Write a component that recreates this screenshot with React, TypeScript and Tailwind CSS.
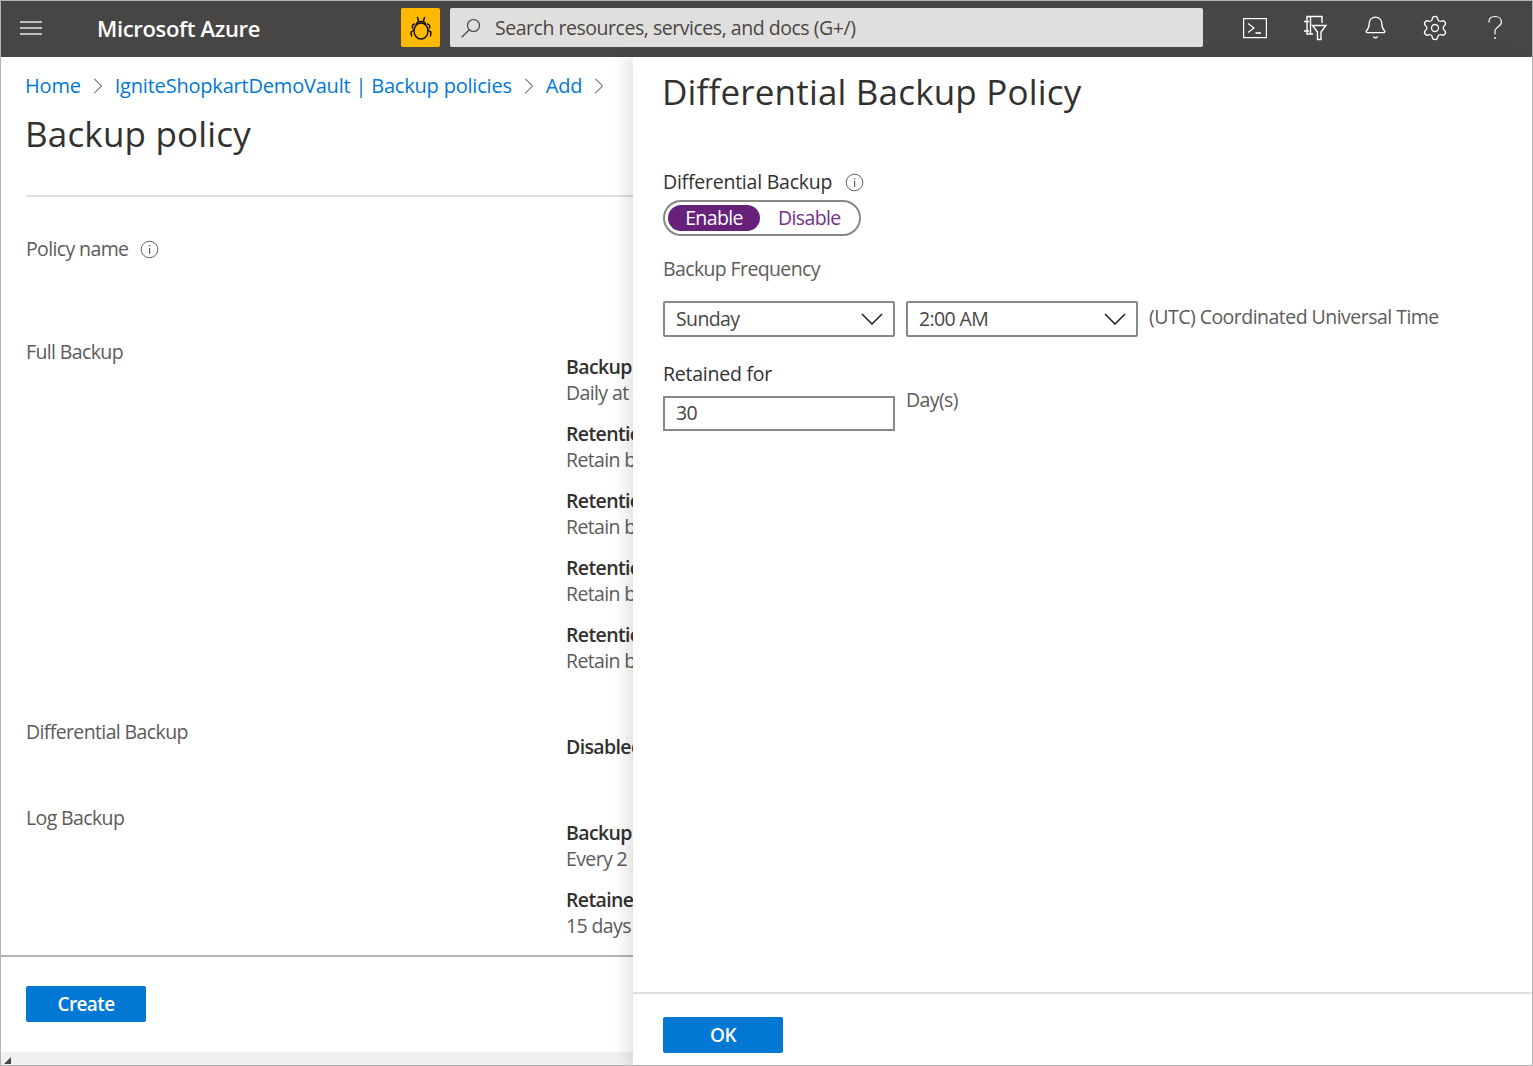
import React from "react";
import { ChevronRight, Settings, Bell } from "lucide-react";

const Info = ({ cls = "" }: { cls?: string }) => (
  <svg width="19" height="19" viewBox="0 0 19 19" className={cls} fill="none">
    <circle cx="9.5" cy="9.5" r="8.3" stroke="#605e5c" strokeWidth="1" />
    <rect x="9" y="8" width="1.2" height="6" fill="#605e5c" />
    <rect x="9" y="5" width="1.2" height="1.4" fill="#605e5c" />
  </svg>
);

const Bug = () => (
  <svg width="24" height="26" viewBox="0 0 24 26" fill="none" stroke="#111" strokeWidth="1.5" strokeLinecap="round" strokeLinejoin="round">
    <ellipse cx="12" cy="16" rx="7" ry="8" />
    <path d="M7.5 9.5 C7.5 5.5 16.5 5.5 16.5 9.5" />
    <path d="M9.5 6 L8.5 2.5 M14.5 6 L15.5 2.5" />
    <path d="M5.5 9 C3.5 9.5 3 11 3.5 13" />
    <path d="M18.5 9 C20.5 9.5 21 11 20.5 13" />
    <path d="M5 15 L2 17 L2.5 21" />
    <path d="M19 15 L22 17 L21.5 21" />
  </svg>
);

const Search = () => (
  <svg width="22" height="22" viewBox="0 0 22 22" fill="none" stroke="#484644" strokeWidth="1.2">
    <circle cx="13.5" cy="8.5" r="6" />
    <path d="M9 13 L2 20" strokeLinecap="round" />
  </svg>
);

const Terminal = () => (
  <svg width="26" height="22" viewBox="0 0 26 22" fill="none" stroke="#fff" strokeWidth="1.2">
    <rect x="1.6" y="1.6" width="22.8" height="19" />
    <path d="M6 6.5 L12 11 L6 15.5" />
    <path d="M13.5 16 H19" strokeWidth="1.6" />
  </svg>
);

const BookFilter = () => (
  <svg width="26" height="26" viewBox="0 0 26 26" fill="none" stroke="#fff" strokeWidth="1.4">
    <path d="M20 8 V1.5 H5 V19 H11" />
    <path d="M8.5 1.5 V19" />
    <path d="M2 6.5 H7 M2 16 H7" />
    <path d="M10.5 10.5 H24 L19 17 V24.5 H15.5 V17 Z" />
  </svg>
);

const Help = () => (
  <svg width="20" height="26" viewBox="0 0 20 26" fill="none" stroke="#fff" strokeWidth="1.2">
    <path d="M4 7 C4 3 7 1.5 10 1.5 C14 1.5 16.5 4 16.5 7 C16.5 11 11 12 10 15.5 V19" strokeLinecap="round" />
    <circle cx="10" cy="23" r="0.9" fill="#fff" stroke="none" />
  </svg>
);

const Detail = ({ title, text, first }: { title: string; text: string; first?: boolean }) => (
  <div className={first ? "" : "mt-[15px]"}>
    <div className="font-semibold text-[#323130] whitespace-nowrap">{title}</div>
    <div className="whitespace-nowrap">{text}</div>
  </div>
);

const Dropdown = ({ value }: { value: string }) => (
  <div className="w-[232px] h-[36px] border-2 border-[#8a8886] rounded-[2px] flex items-center justify-between pl-[11px] pr-[10px] text-[#484644]">
    <span>{value}</span>
    <svg width="22" height="12" viewBox="0 0 22 12" fill="none" stroke="#1f1f1f" strokeWidth="1.5">
      <path d="M1 1 L11 11 L21 1" />
    </svg>
  </div>
);

const Crumb = ({ children }: { children: React.ReactNode }) => (
  <span className="text-[#0078d4] text-[20px] whitespace-nowrap tracking-[-0.01em]">{children}</span>
);

const Sep = () => <ChevronRight size={28} strokeWidth={0.9} className="mx-[3px] text-[#605e5c]" />;

const IconCell = ({ children }: { children: React.ReactNode }) => (
  <div className="w-[60px] h-[40px] flex items-center justify-center">{children}</div>
);

export default function App() {
  return (
    <div
      className="w-[1533px] h-[1066px] flex flex-col overflow-hidden bg-white border-t border-l border-r border-b border-[#b3b3b3] text-[19.5px] leading-[26px] text-[#5d5b59] tracking-[-0.032em]"
      style={{ fontFamily: '"Open Sans", "Noto Sans", sans-serif' }}
    >
      <header className="h-[56px] shrink-0 bg-[#484644] flex items-center text-white pb-[3px]">
        <svg width="22" height="14" viewBox="0 0 22 14" className="ml-[19px]" stroke="#e6e6e6" strokeWidth="1.4">
          <path d="M0 1 H22 M0 7 H22 M0 13 H22" />
        </svg>
        <div className="ml-[55px] w-[304px] text-[22px] font-semibold tracking-[-0.015em]">Microsoft Azure</div>
        <div className="w-[39px] h-[39px] bg-[#ffb900] rounded-[2px] flex items-center justify-center"><Bug /></div>
        <div className="ml-[10px] w-[753px] h-[39px] bg-[#e1dfdd] rounded-[2px] flex items-center pl-[10px] text-[#484644] tracking-[-0.024em]">
          <Search />
          <span className="ml-[13px]">Search resources, services, and docs (G+/)</span>
        </div>
        <div className="ml-[22px] flex items-center">
          <IconCell><Terminal /></IconCell>
          <IconCell><BookFilter /></IconCell>
          <IconCell><Bell size={25} strokeWidth={1.2} /></IconCell>
          <IconCell><Settings size={28} strokeWidth={1.1} /></IconCell>
          <IconCell><Help /></IconCell>
        </div>
      </header>

      <div className="flex flex-1 min-h-0">
        <main className="w-[632px] shrink-0 flex flex-col overflow-hidden">
          <div className="pl-[25px] flex-1 min-h-0">
            <div className="flex items-center mt-[16px] h-[26px] -ml-[1px]">
              <Crumb>Home</Crumb>
              <Sep />
              <Crumb>IgniteShopkartDemoVault | Backup policies</Crumb>
              <Sep />
              <Crumb>Add</Crumb>
              <Sep />
            </div>
            <h1 className="mt-[12px] text-[35px] leading-[46px] font-medium text-[#323130] whitespace-nowrap tracking-[0.005em] -ml-[1px]">Backup policy</h1>
            <div className="mt-[38px] border-t-2 border-[#e1dfdd]" />
            <div className="mt-[39px] flex items-center h-[26px]">
              <span>Policy name</span>
              <Info cls="ml-[12px]" />
            </div>
            <div className="mt-[77px] grid grid-cols-[540px_1fr]">
              <div>Full Backup</div>
              <div className="mt-[15px]">
                <Detail first title="Backup Frequency" text="Daily at 12:00 AM" />
                <Detail title="Retention of daily" text="Retain backup for 30 days" />
                <Detail title="Retention of weekly" text="Retain backup for 4 weeks" />
                <Detail title="Retention of monthly" text="Retain backup for 12 months" />
                <Detail title="Retention of yearly" text="Retain backup for 5 years" />
              </div>
            </div>
            <div className="mt-[45px] grid grid-cols-[540px_1fr]">
              <div>Differential Backup</div>
              <div className="mt-[15px] font-semibold text-[#323130] whitespace-nowrap">Disabled</div>
            </div>
            <div className="mt-[45px] grid grid-cols-[540px_1fr]">
              <div>Log Backup</div>
              <div className="mt-[15px]">
                <Detail first title="Backup Frequency" text="Every 2 hours" />
                <Detail title="Retained for" text="15 days" />
              </div>
            </div>
          </div>
          <div className="h-[110px] shrink-0 border-t-2 border-[#b3b3b3] flex flex-col">
            <div className="flex-1 pl-[25px] pt-[29px]">
              <button className="w-[120px] h-[36px] bg-[#0078d4] rounded-[2px] text-white font-semibold text-[19px]">Create</button>
            </div>
            <div className="h-[13px] bg-[#f0f0f0] relative">
              <div className="absolute left-[3px] bottom-[1px] w-0 h-0 border-l-[7px] border-l-transparent border-b-[7px] border-b-[#484644]" />
            </div>
          </div>
        </main>

        <section className="flex-1 min-w-0 bg-white flex flex-col shadow-[-8px_0_12px_rgba(0,0,0,0.10)] z-10">
          <div className="flex-1 pl-[30px]">
            <h2 className="mt-[12px] text-[35px] leading-[46px] font-medium text-[#323130] whitespace-nowrap tracking-[0.005em] -ml-[1px]">Differential Backup Policy</h2>
            <div className="mt-[54px] flex items-center h-[26px] text-[#323130] font-medium tracking-[-0.012em]">
              <span>Differential Backup</span>
              <Info cls="ml-[13px]" />
            </div>
            <div className="mt-[5px] w-[198px] h-[36px] border-2 border-[#8a8886] rounded-full flex items-center pl-[3px]">
              <div className="w-[92px] h-[26px] bg-[#68217a] rounded-full text-white flex items-center justify-center">Enable</div>
              <div className="ml-[18px] text-[#74308a]">Disable</div>
            </div>
            <div className="mt-[20px]">Backup Frequency</div>
            <div className="mt-[19px] flex items-start">
              <Dropdown value="Sunday" />
              <div className="ml-[11px]"><Dropdown value="2:00 AM" /></div>
              <div className="ml-[11px] -mt-[2px] leading-[36px] whitespace-nowrap tracking-[-0.027em]">(UTC) Coordinated Universal Time</div>
            </div>
            <div className="mt-[24px] text-[#323130] font-medium tracking-[-0.012em]">Retained for</div>
            <div className="mt-[9px] flex items-start">
              <div className="w-[232px] h-[35px] border-2 border-[#8a8886] flex items-center pl-[11px] pb-[2px] text-[#484644]">30</div>
              <div className="ml-[11px] -mt-[9px]">Day(s)</div>
            </div>
          </div>
          <div className="h-[73px] shrink-0 border-t-2 border-[#e1dfdd] pl-[30px] pt-[23px]">
            <button className="w-[120px] h-[36px] bg-[#0078d4] rounded-[2px] text-white font-semibold text-[19px]">OK</button>
          </div>
        </section>
      </div>
    </div>
  );
}
